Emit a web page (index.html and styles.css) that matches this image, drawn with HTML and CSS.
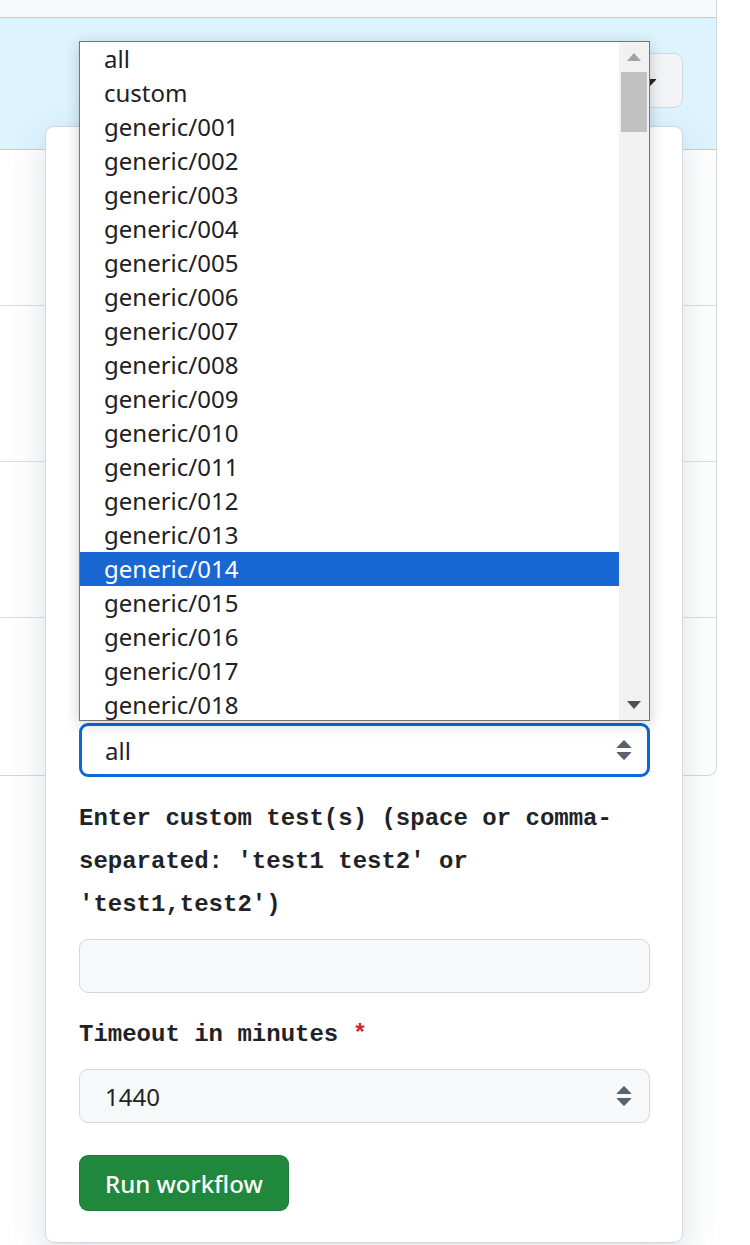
FILE: index.html
```html
<!DOCTYPE html>
<html lang="en">
<head>
<meta charset="utf-8">
<title>Run workflow</title>
<link rel="stylesheet" href="styles.css">
</head>
<body>
<div class="page">
<div class="box">
  <div class="box-row strip"></div>
  <div class="box-row dispatch">
    <p class="dispatch-text">This workflow has a <code>workflow_dispatch</code> event trigger.</p>
    <div class="dispatch-action">
      <button class="btn-menu">Run workflow
        <svg class="caret" viewBox="0 0 16 16" width="32" height="32"><path d="m4.427 7.427 3.396 3.396a.25.25 0 0 0 .354 0l3.396-3.396A.25.25 0 0 0 11.396 7H4.604a.25.25 0 0 0-.177.427Z"/></svg>
      </button>
      <form class="popover">
        <div class="field">
          <p class="label">Use workflow from</p>
          <div class="control">Branch: master
            <svg class="arrows" viewBox="0 0 16 16" width="32" height="32"><path d="M4.427 9.427l3.396 3.396a.25.25 0 00.354 0l3.396-3.396A.25.25 0 0011.396 9H4.604a.25.25 0 00-.177.427zM4.427 6.573l3.396-3.396a.25.25 0 01.354 0l3.396 3.396A.25.25 0 0111.396 7H4.604a.25.25 0 01-.177-.427z"/></svg>
          </div>
        </div>
        <div class="field">
          <p class="label">Filesystem type <span class="req">*</span></p>
          <div class="control">ext4
            <svg class="arrows" viewBox="0 0 16 16" width="32" height="32"><path d="M4.427 9.427l3.396 3.396a.25.25 0 00.354 0l3.396-3.396A.25.25 0 0011.396 9H4.604a.25.25 0 00-.177.427zM4.427 6.573l3.396-3.396a.25.25 0 01.354 0l3.396 3.396A.25.25 0 0111.396 7H4.604a.25.25 0 01-.177-.427z"/></svg>
          </div>
        </div>
        <div class="field">
          <p class="label">Kernel config</p>
          <div class="control">defconfig
            <svg class="arrows" viewBox="0 0 16 16" width="32" height="32"><path d="M4.427 9.427l3.396 3.396a.25.25 0 00.354 0l3.396-3.396A.25.25 0 0011.396 9H4.604a.25.25 0 00-.177.427zM4.427 6.573l3.396-3.396a.25.25 0 01.354 0l3.396 3.396A.25.25 0 0111.396 7H4.604a.25.25 0 01-.177-.427z"/></svg>
          </div>
        </div>
        <div class="field">
          <p class="label">Test group</p>
          <div class="control">quick
            <svg class="arrows" viewBox="0 0 16 16" width="32" height="32"><path d="M4.427 9.427l3.396 3.396a.25.25 0 00.354 0l3.396-3.396A.25.25 0 0011.396 9H4.604a.25.25 0 00-.177.427zM4.427 6.573l3.396-3.396a.25.25 0 01.354 0l3.396 3.396A.25.25 0 0111.396 7H4.604a.25.25 0 01-.177-.427z"/></svg>
          </div>
        </div>
        <div class="field">
          <p class="label">Test(s) to run <span class="req">*</span></p>
          <div class="select-wrap">
            <div class="native-list">
              <div class="opts">
                <div class="opt">all</div>
                <div class="opt">custom</div>
                <div class="opt">generic/001</div>
                <div class="opt">generic/002</div>
                <div class="opt">generic/003</div>
                <div class="opt">generic/004</div>
                <div class="opt">generic/005</div>
                <div class="opt">generic/006</div>
                <div class="opt">generic/007</div>
                <div class="opt">generic/008</div>
                <div class="opt">generic/009</div>
                <div class="opt">generic/010</div>
                <div class="opt">generic/011</div>
                <div class="opt">generic/012</div>
                <div class="opt">generic/013</div>
                <div class="opt sel">generic/014</div>
                <div class="opt">generic/015</div>
                <div class="opt">generic/016</div>
                <div class="opt">generic/017</div>
                <div class="opt">generic/018</div>
                <div class="opt">generic/019</div>
                <div class="opt">generic/020</div>
              </div>
              <div class="sb">
                <div class="sb-btn"><svg width="14" height="8" viewBox="0 0 14 8"><polygon points="7,0 14,8 0,8" fill="#a3a3a3"/></svg></div>
                <div class="sb-track"><div class="thumb"></div></div>
                <div class="sb-btn"><svg width="14" height="8" viewBox="0 0 14 8"><polygon points="0,0 14,0 7,8" fill="#505050"/></svg></div>
              </div>
            </div>
            <div class="control focused">all
              <svg class="arrows" viewBox="0 0 16 16" width="32" height="32"><path d="M4.427 9.427l3.396 3.396a.25.25 0 00.354 0l3.396-3.396A.25.25 0 0011.396 9H4.604a.25.25 0 00-.177.427zM4.427 6.573l3.396-3.396a.25.25 0 01.354 0l3.396 3.396A.25.25 0 0111.396 7H4.604a.25.25 0 01-.177-.427z"/></svg>
            </div>
          </div>
        </div>
        <div class="field">
          <p class="label">Enter custom test(s) (space or comma-separated: 'test1 test2' or 'test1,test2')</p>
          <div class="control"></div>
        </div>
        <div class="field">
          <p class="label">Timeout in minutes <span class="req">*</span></p>
          <div class="control">1440
            <svg class="arrows" viewBox="0 0 16 16" width="32" height="32"><path d="M4.427 9.427l3.396 3.396a.25.25 0 00.354 0l3.396-3.396A.25.25 0 0011.396 9H4.604a.25.25 0 00-.177.427zM4.427 6.573l3.396-3.396a.25.25 0 01.354 0l3.396 3.396A.25.25 0 0111.396 7H4.604a.25.25 0 01-.177-.427z"/></svg>
          </div>
        </div>
        <button type="button" class="btn-primary">Run workflow</button>
      </form>
    </div>
  </div>
  <div class="box-row run">
    <p class="run-title">xfstests: generic/013 on ext4</p>
    <p class="run-meta">Run #412 · manually run by maintainer</p>
  </div>
  <div class="box-row run">
    <p class="run-title">xfstests: all on xfs</p>
    <p class="run-meta">Run #411 · manually run by maintainer</p>
  </div>
  <div class="box-row run">
    <p class="run-title">xfstests: custom on btrfs</p>
    <p class="run-meta">Run #410 · manually run by maintainer</p>
  </div>
  <div class="box-row run last">
    <p class="run-title">xfstests: generic/001 on ext4</p>
    <p class="run-meta">Run #409 · manually run by maintainer</p>
  </div>
</div>
</div>
</body>
</html>
```

FILE: styles.css
```css
* { box-sizing: border-box; }

html, body {
  margin: 0;
  background: #ffffff;
}

body {
  font-family: "Noto Sans", "Liberation Sans", sans-serif;
  color: #1f2328;
}

.page {
  min-height: 1245px;
  padding-bottom: 1px;
}

.box {
  width: 718px;
  margin-left: -1px;
  border: 1px solid #d0d7de;
  border-top: 0;
  border-radius: 0 0 9px 0;
}

.box-row { margin: 0; }

.strip {
  height: 18px;
  background: #f6f8fa;
  border-bottom: 1px solid #a5d6ff;
}

.dispatch {
  height: 132px;
  background: #ddf4ff;
  border-bottom: 1px solid #a5d6ff;
  display: flex;
  justify-content: space-between;
  align-items: flex-start;
  gap: 20px;
  padding: 35px 33px 0 100px;
}

.dispatch-text {
  margin: 8px 0 0;
  font-size: 20px;
  line-height: 28px;
}

.dispatch-text code {
  font-family: "Liberation Mono", monospace;
  font-size: 18px;
}

.dispatch-action {
  position: relative;
  flex-shrink: 0;
}

.btn-menu {
  height: 55px;
  display: flex;
  align-items: center;
  gap: 4px;
  padding: 0 17px 0 24px;
  background: #f3f4f6;
  border: 1px solid #d0d7de;
  border-radius: 9px;
  font-family: "Noto Sans", sans-serif;
  font-size: 21px;
  font-weight: 500;
  color: #25292e;
}

.caret { fill: #25292e; }

.popover {
  position: absolute;
  right: 0;
  top: calc(100% + 18px);
  width: 638px;
  margin: 0;
  display: flex;
  flex-direction: column;
  gap: 20px;
  padding: 20px 32px 31px 33px;
  background: #ffffff;
  border: 1px solid #d0d7de;
  border-radius: 9px;
  box-shadow: 0 12px 36px rgba(140, 149, 159, 0.3);
  z-index: 5;
}

.field {
  display: flex;
  flex-direction: column;
  gap: 13px;
}

.label {
  margin: 0;
  font-family: "Liberation Mono", "DejaVu Sans Mono", monospace;
  font-weight: bold;
  font-size: 24px;
  line-height: 43px;
  color: #1f2328;
}

.req { color: #d1242f; }

.control {
  height: 54px;
  display: flex;
  align-items: center;
  padding: 0 9px 0 25px;
  background: #f6f8fa;
  border: 1px solid #d0d7de;
  border-radius: 9px;
  font-size: 24px;
  color: #1f2328;
}

.control.focused {
  background: #ffffff;
  border: 3px solid #0969da;
  padding: 0 7px 0 23px;
}

.arrows {
  margin-left: auto;
  fill: #59636e;
  flex-shrink: 0;
}

.select-wrap { position: relative; }

.native-list {
  position: absolute;
  left: 0;
  bottom: calc(100% + 2px);
  width: 100%;
  height: 680px;
  display: flex;
  background: #ffffff;
  border: 1px solid #767676;
  box-shadow: 0 3px 14px rgba(0, 0, 0, 0.2);
  z-index: 10;
}

.opts {
  flex: 1;
  overflow: hidden;
}

.opt {
  height: 34px;
  line-height: 34px;
  padding-left: 24px;
  font-size: 24px;
  color: #202124;
  white-space: nowrap;
}

.opt.sel {
  background: #1967d2;
  color: #ffffff;
}

.sb {
  width: 30px;
  background: #f1f1f1;
  display: flex;
  flex-direction: column;
}

.sb-btn {
  height: 30px;
  display: flex;
  align-items: center;
  justify-content: center;
}

.sb-track { flex: 1; }

.thumb {
  margin: 0 2px;
  height: 60px;
  background: #c1c1c1;
}

.btn-primary {
  align-self: flex-start;
  margin-top: 12px;
  height: 56px;
  padding: 0 25px;
  background: #1f883d;
  border: 1px solid rgba(31, 35, 40, 0.15);
  border-radius: 9px;
  color: #ffffff;
  font-family: "Noto Sans", sans-serif;
  font-size: 24px;
  font-weight: 500;
}

.run {
  height: 156px;
  border-bottom: 1px solid #d8dee4;
  padding: 40px 60px;
}

.run.last {
  height: 157px;
  border-bottom: 0;
}

.run-title {
  margin: 0 0 8px;
  font-size: 21px;
  font-weight: 600;
  white-space: nowrap;
  overflow: hidden;
  text-overflow: ellipsis;
}

.run-meta {
  margin: 0;
  font-size: 18px;
  color: #59636e;
}
```
